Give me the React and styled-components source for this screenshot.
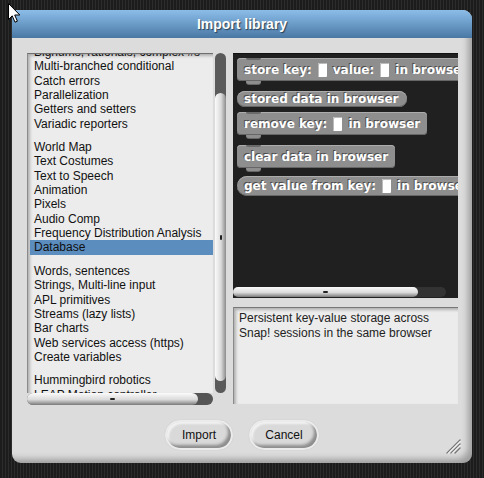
import React from 'react';
import styled, { createGlobalStyle } from 'styled-components';

const GlobalStyle = createGlobalStyle`
  html, body { margin: 0; padding: 0; }
  body {
    width: 484px;
    height: 478px;
    overflow: hidden;
    background: repeating-linear-gradient(90deg, #1c1c1c 0 2px, #2c2c2c 2px 3px);
    font-family: "Liberation Sans", Arial, sans-serif;
  }
`;

const Page = styled.div`
  position: relative;
  width: 484px;
  height: 478px;
  padding: 10px 0 0 12px;
  box-sizing: border-box;
`;

const Dialog = styled.div`
  position: relative;
  width: 460px;
  height: 453px;
  border-radius: 2px 9px 9px 9px;
  background: #dcdcdc;
  box-shadow: inset -7px -7px 6px -3px rgba(0, 0, 0, 0.28);
  display: flex;
  flex-direction: column;
  overflow: hidden;
`;

const TitleBar = styled.div`
  height: 28px;
  flex-shrink: 0;
  background: linear-gradient(#8cbde9, #4a78a5);
  color: #fff;
  font-weight: bold;
  font-size: 14px;
  display: flex;
  align-items: center;
  justify-content: center;
  text-shadow: 1px 1px 1px rgba(0, 0, 0, 0.55);
`;

const Body = styled.div`
  display: flex;
  flex-direction: column;
  padding: 15px 0 0 15px;
`;

const Columns = styled.div`
  display: flex;
  gap: 7px;
`;

const LeftCol = styled.div`
  display: flex;
  flex-direction: column;
  width: 199px;
`;

const ListRow = styled.div`
  display: flex;
  gap: 2px;
  height: 340px;
`;

const ListBox = styled.div`
  width: 186px;
  box-sizing: border-box;
  background: #ececec;
  border-top: 1px solid #6f6f6f;
  border-left: 1px solid #8a8a8a;
  box-shadow: inset 2px 2px 3px rgba(0, 0, 0, 0.25);
  overflow: hidden;
  font-size: 12px;
  color: #111;
`;

const ListInner = styled.div`
  margin-top: -9px;
  padding-left: 2px;
`;

const Item = styled.div`
  height: 14.35px;
  line-height: 14.35px;
  padding-left: 4px;
  white-space: nowrap;
  background: ${p => (p.$selected ? '#5b8dbf' : 'transparent')};
`;

const Separator = styled.div`
  height: 9px;
`;

const VTrack = styled.div`
  width: 11px;
  border-radius: 6px;
  background: #5a5a5a;
  display: flex;
  flex-direction: column;
  padding: ${p => p.$before}px 0 ${p => p.$after}px;
  box-sizing: border-box;
`;

const VThumb = styled.div`
  flex: 1;
  border-radius: 6px;
  background: linear-gradient(90deg, #fbfbfb, #dadada 55%, #8c8c8c);
  display: flex;
  align-items: center;
  justify-content: center;
`;

const HTrack = styled.div`
  width: ${p => p.$w}px;
  height: ${p => p.$h}px;
  border-radius: 6px;
  background: ${p => p.$track};
  display: flex;
`;

const HThumb = styled.div`
  width: ${p => p.$w}px;
  height: 100%;
  border-radius: 6px;
  background: linear-gradient(#fbfbfb, #dadada 55%, #7a7a7a);
  display: flex;
  align-items: center;
  justify-content: center;
`;

const Grip = styled.span`
  display: block;
  width: ${p => (p.$vertical ? 2 : 5)}px;
  height: ${p => (p.$vertical ? 5 : 2)}px;
  background: #222;
  border-radius: 1px;
`;

const RightCol = styled.div`
  display: flex;
  flex-direction: column;
  width: 225px;
`;

const Palette = styled.div`
  height: 245px;
  box-sizing: border-box;
  background: #202020;
  border-top: 1px solid #111;
  display: flex;
  flex-direction: column;
  overflow: hidden;
`;

const Blocks = styled.div`
  flex: 1;
  display: flex;
  flex-direction: column;
  align-items: flex-start;
  padding: 4px 0 0 4px;
  overflow: hidden;
`;

const blockText = `
  color: #fff;
  font: bold 12px "DejaVu Sans", Verdana, sans-serif;
  text-shadow: -1px -1px 0 #4e4e4e;
  white-space: nowrap;
  background: #8e8e8e;
  box-shadow: inset 0 1px 0 #acacac, inset 0 -1px 0 #666;
`;

const Command = styled.div`
  position: relative;
  display: inline-flex;
  align-items: center;
  gap: 6px;
  height: 23px;
  box-sizing: border-box;
  padding: 0 7px;
  margin-bottom: ${p => p.$mb}px;
  border-radius: 4px;
  ${blockText}
  &::before {
    content: '';
    position: absolute;
    top: 0;
    left: 9px;
    width: 15px;
    height: 2px;
    background: #6a6a6a;
    border-radius: 0 0 3px 3px;
  }
  &::after {
    content: '';
    position: absolute;
    bottom: -3px;
    left: 9px;
    width: 15px;
    height: 3px;
    background: #8e8e8e;
    border-radius: 0 0 3px 3px;
    box-shadow: 0 1px 0 #666;
  }
`;

const Reporter = styled.div`
  display: inline-flex;
  align-items: center;
  gap: 6px;
  line-height: 15px;
  padding: ${p => (p.$tall ? 3 : 1)}px 8px ${p => (p.$tall ? 3 : 1)}px 7px;
  margin-bottom: ${p => p.$mb}px;
  border-radius: 11px;
  ${blockText}
`;

const Slot = styled.span`
  display: inline-block;
  width: 9px;
  height: 14px;
  background: #fff;
  border-radius: 1px;
  box-shadow: inset 1px 1px 0 #bbb;
`;

const PaletteScroll = styled.div`
  padding: 0 0 1px 0;
`;

const Description = styled.div`
  margin-top: 9px;
  height: 97px;
  box-sizing: border-box;
  background: #ececec;
  border-top: 1px solid #777;
  border-left: 1px solid #8a8a8a;
  box-shadow: inset 2px 2px 3px rgba(0, 0, 0, 0.25);
  padding: 3px 5px;
  font-size: 12px;
  line-height: 14.5px;
  color: #222;
`;

const ButtonRow = styled.div`
  display: flex;
  justify-content: center;
  gap: 16px;
  margin: 15px 0 0 -15px;
`;

const Button = styled.button`
  width: ${p => p.$w}px;
  height: 30px;
  padding: 0;
  border-radius: 15px;
  border: 2px solid #ebebeb;
  background: #d9d9d9;
  box-shadow: inset -3px -3px 3px rgba(0, 0, 0, 0.35), inset 2px 2px 2px #f2f2f2, 0 0 1px #bbb;
  font: 12px "Liberation Sans", Arial, sans-serif;
  color: #111;
`;

const Resize = styled.svg`
  position: absolute;
  right: 11px;
  bottom: 9px;
`;

const Cursor = styled.svg`
  position: absolute;
  left: 7px;
  top: 2px;
`;

const top = [
  'Bignums, rationals, complex #s',
  'Multi-branched conditional',
  'Catch errors',
  'Parallelization',
  'Getters and setters',
  'Variadic reporters',
];
const mid = [
  'World Map',
  'Text Costumes',
  'Text to Speech',
  'Animation',
  'Pixels',
  'Audio Comp',
  'Frequency Distribution Analysis',
  'Database',
];
const low = [
  'Words, sentences',
  'Strings, Multi-line input',
  'APL primitives',
  'Streams (lazy lists)',
  'Bar charts',
  'Web services access (https)',
  'Create variables',
];
const last = ['Hummingbird robotics', 'LEAP Motion controller'];

export default function App() {
  const groups = [top, mid, low, last];
  return (
    <Page>
      <GlobalStyle />
      <Dialog>
        <TitleBar>Import library</TitleBar>
        <Body>
          <Columns>
            <LeftCol>
              <ListRow>
                <ListBox>
                  <ListInner>
                    {groups.map((g, gi) => (
                      <React.Fragment key={gi}>
                        {gi > 0 && <Separator />}
                        {g.map(name => (
                          <Item key={name} $selected={name === 'Database'}>
                            {name}
                          </Item>
                        ))}
                      </React.Fragment>
                    ))}
                  </ListInner>
                </ListBox>
                <VTrack $before={40} $after={12}>
                  <VThumb>
                    <Grip $vertical />
                  </VThumb>
                </VTrack>
              </ListRow>
              <HTrack $w={186} $h={12} $track="#555">
                <HThumb $w={171}>
                  <Grip />
                </HThumb>
              </HTrack>
            </LeftCol>
            <RightCol>
              <Palette>
                <Blocks>
                  <Command $mb={10}>
                    store key: <Slot /> value: <Slot /> in browser
                  </Command>
                  <Reporter $mb={5}>stored data in browser</Reporter>
                  <Command $mb={10}>
                    remove key: <Slot /> in browser
                  </Command>
                  <Command $mb={8}>clear data in browser</Command>
                  <Reporter $tall $mb={0}>
                    get value from key: <Slot /> in browser
                  </Reporter>
                </Blocks>
                <PaletteScroll>
                  <HTrack $w={213} $h={10} $track="#333">
                    <HThumb $w={185}>
                      <Grip />
                    </HThumb>
                  </HTrack>
                </PaletteScroll>
              </Palette>
              <Description>
                Persistent key-value storage across
                <br />
                Snap! sessions in the same browser
              </Description>
            </RightCol>
          </Columns>
          <ButtonRow>
            <Button $w={68}>Import</Button>
            <Button $w={70}>Cancel</Button>
          </ButtonRow>
        </Body>
        <Resize width="16" height="16" viewBox="0 0 16 16">
          <g stroke="#777" strokeWidth="1.4" strokeLinecap="round">
            <line x1="2" y1="15" x2="15" y2="2" />
            <line x1="6" y1="15" x2="15" y2="6" />
            <line x1="10" y1="15" x2="15" y2="10" />
          </g>
          <g stroke="#fff" strokeWidth="1">
            <line x1="3" y1="15.5" x2="15.5" y2="3" />
            <line x1="7" y1="15.5" x2="15.5" y2="7" />
          </g>
        </Resize>
      </Dialog>
      <Cursor width="14" height="22" viewBox="0 0 14 22">
        <path d="M1.5 1.5 L1.5 17.5 L5.2 13.8 L8 20.2 L10.4 19.2 L7.7 13 L12.8 13 Z" fill="#fff" stroke="#000" strokeWidth="1" strokeLinejoin="round" />
      </Cursor>
    </Page>
  );
}
